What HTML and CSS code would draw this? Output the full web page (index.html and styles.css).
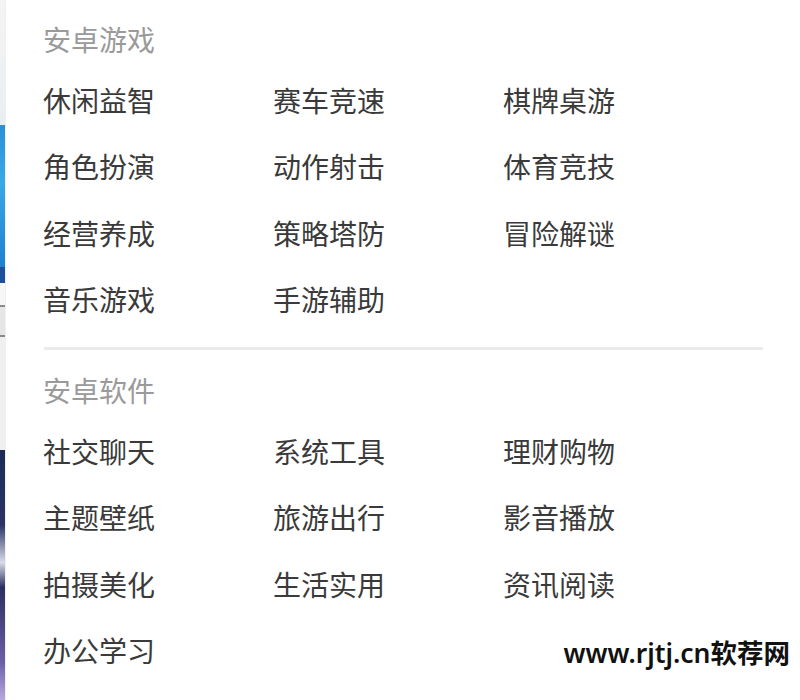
FILE: index.html
```html
<!DOCTYPE html>
<html lang="zh">
<head>
<meta charset="utf-8">
<title>分类菜单</title>
<link rel="stylesheet" href="styles.css">
</head>
<body>
<div class="page">
  <div class="edge">
    <div class="seg seg-top"></div>
    <div class="seg seg-blue"></div>
    <div class="seg seg-navy"></div>
    <div class="seg seg-white"></div>
    <div class="seg seg-box"></div>
    <div class="seg seg-light"></div>
    <div class="seg seg-dark"></div>
  </div>
  <div class="menu">
    <section class="group">
      <h2 class="heading">安卓游戏</h2>
      <ul class="items">
        <li>休闲益智</li><li>赛车竞速</li><li>棋牌桌游</li>
        <li>角色扮演</li><li>动作射击</li><li>体育竞技</li>
        <li>经营养成</li><li>策略塔防</li><li>冒险解谜</li>
        <li>音乐游戏</li><li>手游辅助</li>
      </ul>
    </section>
    <hr class="divider">
    <section class="group group-second">
      <h2 class="heading">安卓软件</h2>
      <ul class="items">
        <li>社交聊天</li><li>系统工具</li><li>理财购物</li>
        <li>主题壁纸</li><li>旅游出行</li><li>影音播放</li>
        <li>拍摄美化</li><li>生活实用</li><li>资讯阅读</li>
        <li>办公学习</li>
      </ul>
    </section>
  </div>
  <div class="watermark">www.rjtj.cn软荐网</div>
</div>
</body>
</html>
```

FILE: styles.css
```css
html, body {
  margin: 0;
  padding: 0;
  background: #ffffff;
}

.page {
  position: relative;
  width: 800px;
  height: 700px;
  display: flex;
  overflow: hidden;
  font-family: "Noto Sans CJK SC", "Noto Sans", sans-serif;
}

.edge {
  width: 5px;
  flex: none;
  display: flex;
  flex-direction: column;
  border-right: 1px solid #f0f0f0;
}

.seg { flex: none; }
.seg-top { height: 125px; background: linear-gradient(#f4f4f4, #e9eef2); }
.seg-blue { height: 142px; background: linear-gradient(#2a8fd8, #39a9e8 40%, #1f7fd0); }
.seg-navy { height: 16px; background: #1c4f9c; }
.seg-white { height: 22px; background: #f7f7f7; }
.seg-box { height: 28px; background: #e6e6e6; border-top: 2px solid #8a8a8a; border-bottom: 2px solid #8a8a8a; }
.seg-light { height: 113px; background: #efefef; }
.seg-dark { flex: 1; background: linear-gradient(#1d2a55, #2a3566 30%, #d8dbe8 45%, #2b2f60 55%, #6c5fa8 85%, #b7a9de); }

.menu {
  flex: 1;
  padding-left: 37px;
  padding-right: 36px;
}

.group { margin: 0; }

.heading {
  margin: 0;
  padding-top: 11px;
  font-size: 28px;
  line-height: 56px;
  font-weight: 400;
  color: #9a9a9a;
}

.group-second .heading { padding-top: 12px; }

.items {
  list-style: none;
  margin: 0;
  padding: 0;
  display: grid;
  grid-template-columns: 230px 230px 230px;
  grid-auto-rows: 66.3px;
}

.items li {
  font-size: 28px;
  line-height: 66px;
  color: #3a3a3a;
  white-space: nowrap;
}

.divider {
  margin: 15px 0 0 1px;
  width: 719px;
  height: 3px;
  border: none;
  background: #ebebeb;
}

.watermark {
  position: absolute;
  right: 10px;
  bottom: 31px;
  font-family: "Noto Sans", "Noto Sans CJK SC", sans-serif;
  font-size: 26.5px;
  font-weight: 600;
  line-height: 32px;
  color: #111111;
}
```
